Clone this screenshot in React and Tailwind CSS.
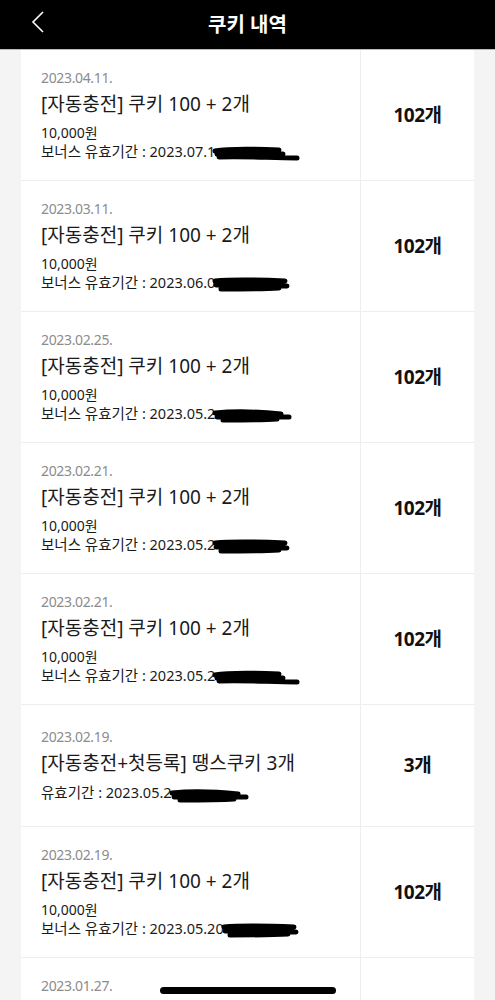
import React from "react";

const rows = [
  { date: "2023.04.11.", title: "[자동충전] 쿠키 100 + 2개", price: "10,000원", bonus: "보너스 유효기간 : 2023.07.1", amount: "102개", blob: "a" },
  { date: "2023.03.11.", title: "[자동충전] 쿠키 100 + 2개", price: "10,000원", bonus: "보너스 유효기간 : 2023.06.0", amount: "102개", blob: "b" },
  { date: "2023.02.25.", title: "[자동충전] 쿠키 100 + 2개", price: "10,000원", bonus: "보너스 유효기간 : 2023.05.2", amount: "102개", blob: "c" },
  { date: "2023.02.21.", title: "[자동충전] 쿠키 100 + 2개", price: "10,000원", bonus: "보너스 유효기간 : 2023.05.2", amount: "102개", blob: "b" },
  { date: "2023.02.21.", title: "[자동충전] 쿠키 100 + 2개", price: "10,000원", bonus: "보너스 유효기간 : 2023.05.2", amount: "102개", blob: "a" },
  { date: "2023.02.19.", title: "[자동충전+첫등록] 땡스쿠키 3개", price: null, bonus: "유효기간 : 2023.05.2", amount: "3개", blob: "c" },
  { date: "2023.02.19.", title: "[자동충전] 쿠키 100 + 2개", price: "10,000원", bonus: "보너스 유효기간 : 2023.05.20", amount: "102개", blob: "b" },
];

function Blob({ kind }) {
  if (kind === "a") {
    return (
      <svg width="90" height="18" viewBox="0 0 90 18" className="inline-block align-middle -ml-[4px]">
        <path d="M4 7 C20 4 45 5 68 6 M6 10 C30 8 55 9 72 10 M8 13 C35 12 60 14 86 14" stroke="#000" strokeWidth="5" strokeLinecap="round" fill="none" />
      </svg>
    );
  }
  if (kind === "b") {
    return (
      <svg width="80" height="18" viewBox="0 0 80 18" className="inline-block align-middle -ml-[4px]">
        <path d="M4 6 C25 4 50 5 74 6 M5 10 C30 9 55 10 76 11 M10 14 C30 14 50 14 68 13" stroke="#000" strokeWidth="5" strokeLinecap="round" fill="none" />
      </svg>
    );
  }
  return (
    <svg width="84" height="18" viewBox="0 0 84 18" className="inline-block align-middle -ml-[4px]">
      <path d="M4 7 C25 5 50 6 70 8 M6 11 C30 10 55 11 78 11 M12 14 C30 14 50 14 66 13" stroke="#000" strokeWidth="5" strokeLinecap="round" fill="none" />
    </svg>
  );
}

export default function App() {
  return (
    <div
      className="relative w-[495px] h-[1000px] overflow-hidden bg-[#f4f4f4]"
      style={{ fontFamily: '"Noto Sans", "Noto Sans CJK KR", sans-serif' }}
    >
      <div className="h-[50px] bg-black flex items-center justify-center relative border-b border-[#bbb]">
        <svg width="16" height="24" viewBox="0 0 16 24" className="absolute left-[30px] top-[10px]">
          <path d="M13 2 L3 12 L13 22" stroke="#fff" strokeWidth="1.6" fill="none" />
        </svg>
        <span className="text-white text-[20px] font-bold">쿠키 내역</span>
      </div>
      <div className="mx-[21px] bg-white">
        {rows.map((r, i) => (
          <div
            key={i}
            className={`flex border-b border-[#eeeeee] ${r.price ? "h-[131px]" : "h-[122px]"}`}
          >
            <div className="flex-1 flex flex-col justify-center pl-[20px] border-r border-[#eeeeee]">
              <div className="text-[14px] leading-[20px] text-[#8c8c8c] tracking-tight">{r.date}</div>
              <div className="mt-[2px] text-[19px] leading-[28px] text-[#1a1a1a]">{r.title}</div>
              {r.price && (
                <div className="mt-[6px] text-[14px] leading-[18px] text-[#1a1a1a]">{r.price}</div>
              )}
              <div className={`${r.price ? "" : "mt-[6px]"} text-[14.5px] leading-[18px] text-[#1a1a1a] whitespace-nowrap`}>
                {r.bonus}
                <Blob kind={r.blob} />
              </div>
            </div>
            <div className="w-[113px] flex items-center justify-center text-[19px] font-bold text-[#111] tracking-tight">
              {r.amount}
            </div>
          </div>
        ))}
        <div className="flex h-[131px]">
          <div className="flex-1 pl-[20px] pt-[18px] border-r border-[#eeeeee]">
            <div className="text-[14px] leading-[20px] text-[#8c8c8c] tracking-tight">2023.01.27.</div>
          </div>
          <div className="w-[113px]" />
        </div>
      </div>
      <div className="absolute left-[160px] top-[987px] w-[176px] h-[7px] rounded-full bg-black" />
    </div>
  );
}
